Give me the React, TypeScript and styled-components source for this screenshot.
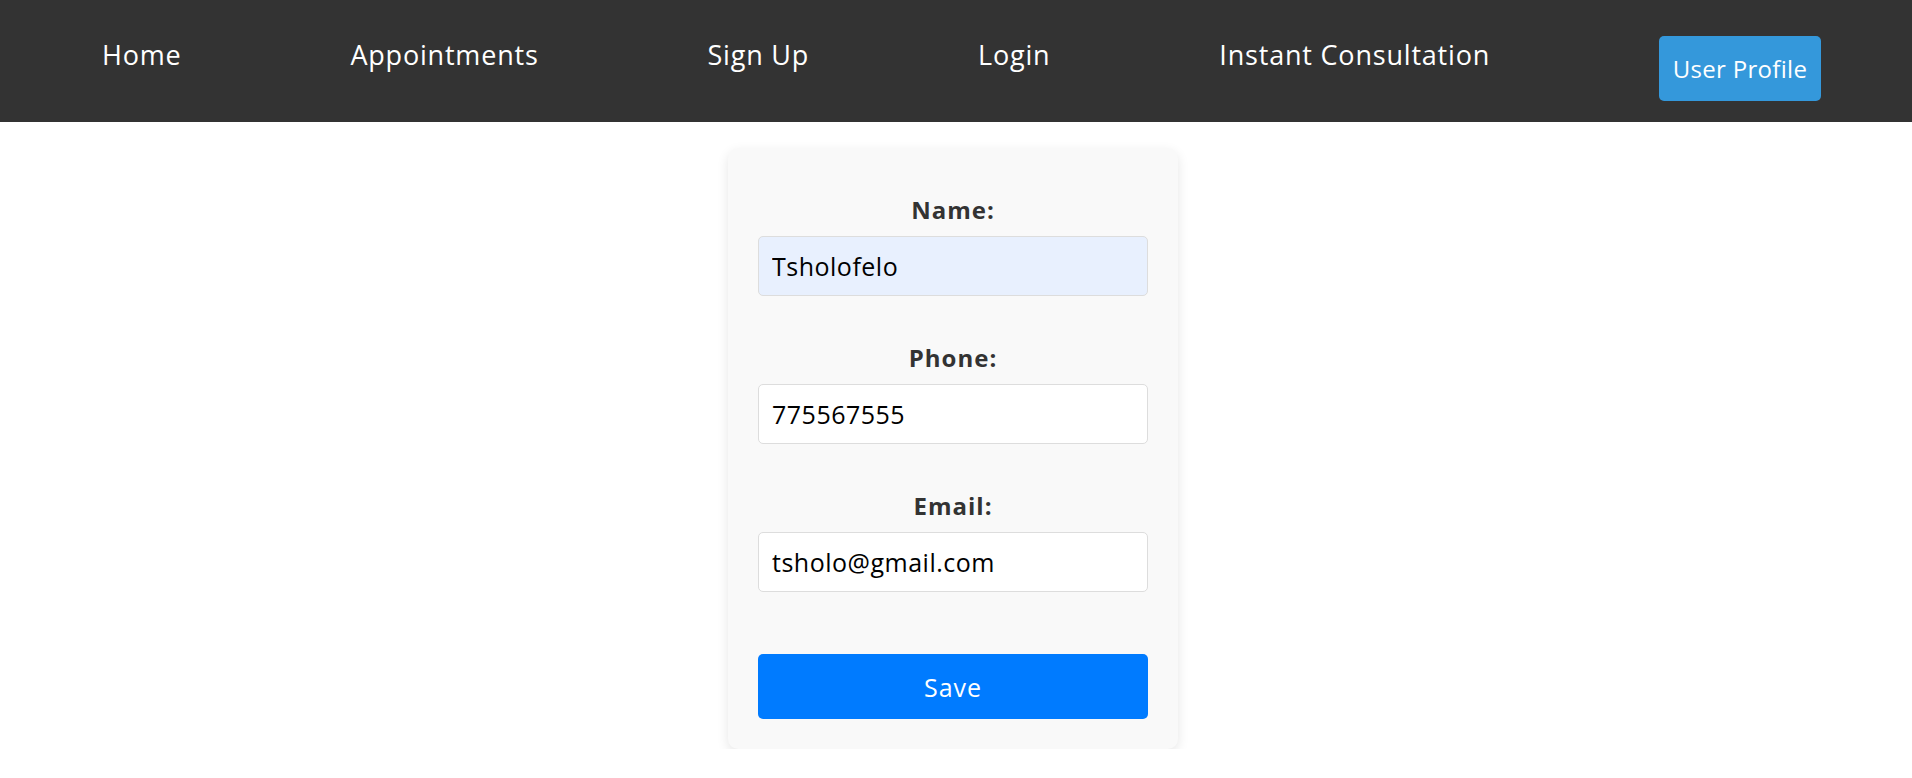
import React from "react";
import styled, { createGlobalStyle } from "styled-components";

const links = ["Home", "Appointments", "Sign Up", "Login", "Instant Consultation"];

const fields = [
  { id: "name", label: "Name:", value: "Tsholofelo", type: "text", autofill: true },
  { id: "phone", label: "Phone:", value: "775567555", type: "tel", autofill: false },
  { id: "email", label: "Email:", value: "tsholo@gmail.com", type: "email", autofill: false },
];

export default function App() {
  return (
    <>
      <GlobalStyle />
      <Navbar>
        {links.map((l) => (
          <NavLink key={l} href="#">
            {l}
          </NavLink>
        ))}
        <ProfileButton type="button">User Profile</ProfileButton>
      </Navbar>

      <Main>
        <Card>
          <Form onSubmit={(e) => e.preventDefault()}>
            {fields.map((f) => (
              <Field key={f.id}>
                <Label htmlFor={f.id}>{f.label}</Label>
                <Input id={f.id} type={f.type} defaultValue={f.value} $autofill={f.autofill} />
              </Field>
            ))}
            <SaveButton type="submit">Save</SaveButton>
          </Form>
        </Card>
      </Main>
    </>
  );
}

const GlobalStyle = createGlobalStyle`
  * {
    box-sizing: border-box;
  }
  body {
    margin: 0;
    background: #fff;
    font-family: "Open Sans", "Liberation Sans", sans-serif;
  }
`;

const Navbar = styled.nav`
  height: 122px;
  background: #333;
  display: flex;
  align-items: center;
  justify-content: space-between;
  padding: 0 91px 0 102px;
`;

const NavLink = styled.a`
  color: #fff;
  text-decoration: none;
  font-size: 27px;
  letter-spacing: 0.8px;
  line-height: 32px;
  margin-bottom: 12px;
`;

const ProfileButton = styled.button`
  width: 162px;
  height: 65px;
  margin-top: 15px;
  background: #3498db;
  color: #fff;
  border: none;
  border-radius: 5px;
  font-family: inherit;
  font-size: 24px;
  letter-spacing: 0.3px;
  cursor: pointer;
`;

const Main = styled.main`
  display: flex;
  justify-content: center;
  padding: 26px 6px 0 0;
`;

const Card = styled.div`
  width: 450px;
  padding: 30px;
  background: #f9f9f9;
  border-radius: 10px;
  box-shadow: 0 4px 12px rgba(0, 0, 0, 0.1);
`;

const Form = styled.form`
  display: flex;
  flex-direction: column;
`;

const Field = styled.div`
  display: flex;
  flex-direction: column;
  padding-top: 14px;
  margin-bottom: 30px;
`;

const Label = styled.label`
  text-align: center;
  font-weight: 700;
  font-size: 24px;
  letter-spacing: 1px;
  line-height: 36px;
  color: #333;
  margin-bottom: 8px;
`;

const Input = styled.input<{ $autofill: boolean }>`
  width: 100%;
  height: 60px;
  padding: 0 13px;
  border: 1px solid #ddd;
  border-radius: 5px;
  background: ${(p) => (p.$autofill ? "#e8f0fe" : "#fff")};
  font-family: inherit;
  font-size: 25px;
  letter-spacing: 0.5px;
  color: #000;
  outline: none;
`;

const SaveButton = styled.button`
  display: block;
  width: 100%;
  height: 65px;
  margin-top: 32px;
  background: #007bff;
  color: #fff;
  border: none;
  border-radius: 5px;
  font-family: inherit;
  font-size: 25px;
  letter-spacing: 1px;
  cursor: pointer;
`;
